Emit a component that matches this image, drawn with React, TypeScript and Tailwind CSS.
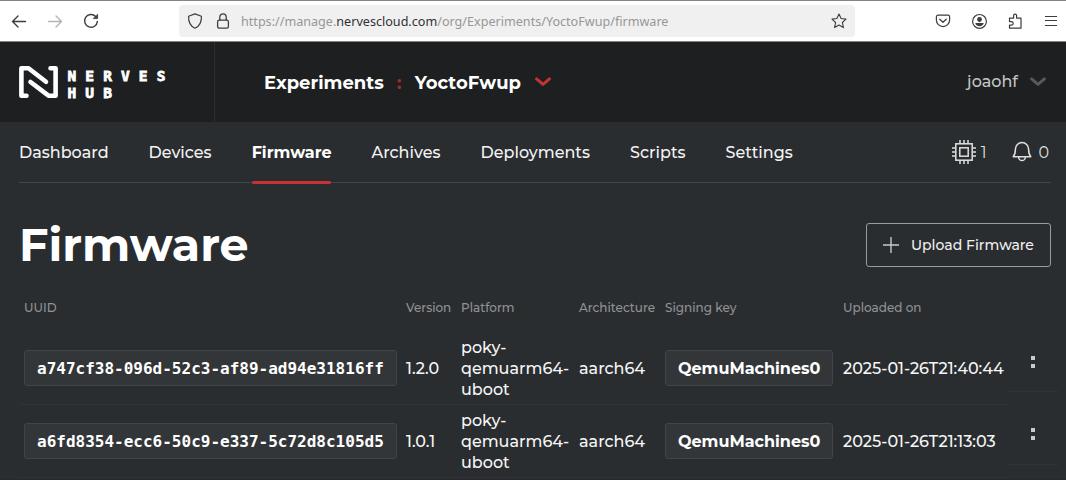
import type { ReactNode } from "react";

type IconProps = { className?: string; children: ReactNode; box: string; w: number; h: number };

function Icon({ className, children, box, w, h }: IconProps) {
  return (
    <svg
      className={className}
      width={w}
      height={h}
      viewBox={box}
      fill="none"
      stroke="currentColor"
      strokeLinecap="round"
      strokeLinejoin="round"
    >
      {children}
    </svg>
  );
}

function BrowserBar() {
  return (
    <div className="flex h-[42px] shrink-0 items-center border-y border-[#858585] bg-white pl-[11px] text-[#3d3d3d]">
      <Icon box="0 0 16 16" w={16} h={16}>
        <path d="M14.5 8.5H1.5M7 3L1.5 8.5L7 14" strokeWidth="1.4" />
      </Icon>
      <Icon box="0 0 16 16" w={16} h={16} className="ml-5 text-[#b4b4b4]">
        <path d="M1.5 8.5H14.5M9 3L14.5 8.5L9 14" strokeWidth="1.4" />
      </Icon>
      <Icon box="0 0 16 16" w={16} h={16} className="ml-5">
        <path d="M12.6 3.4A6.4 6.4 0 1 0 14.4 8.4" strokeWidth="1.4" />
        <path d="M14.6 1.6V5.6H10.6Z" fill="currentColor" strokeWidth="0.8" />
      </Icon>
      <div className="ml-[80px] flex h-8 w-[676px] items-center rounded bg-[#f0f0f0] pl-2 pr-2">
        <Icon box="0 0 16 16" w={16} h={16}>
          <path d="M8 .9L14.4 3.2C14.6 8.6 12.6 13.2 8 15.2C3.4 13.2 1.4 8.6 1.6 3.2Z" strokeWidth="1.2" />
        </Icon>
        <Icon box="0 0 14 16" w={14} h={16} className="ml-[13px]">
          <rect x="1.6" y="7.2" width="10.8" height="8" rx="1.6" strokeWidth="1.3" />
          <path d="M3.8 7V4A3.2 3.2 0 0 1 10.2 4V7" strokeWidth="1.3" />
        </Icon>
        <div className="ml-[11px] whitespace-nowrap pt-0.5 font-['Noto_Sans',sans-serif] text-[12.6px] font-normal leading-none text-[#979797]">
          https://manage.<span className="text-[#303030]">nervescloud.com</span>/org/Experiments/YoctoFwup/firmware
        </div>
        <Icon box="0 0 16 16" w={16} h={16} className="ml-auto">
          <path
            d="M8 1L10.1 5.5L15 6.1L11.4 9.5L12.4 14.6L8 12.1L3.6 14.6L4.6 9.5L1 6.1L5.9 5.5Z"
            strokeWidth="1.1"
          />
        </Icon>
      </div>
      <div className="ml-[80px] flex items-center gap-5">
        <Icon box="0 0 16 16" w={16} h={16}>
          <path d="M3 2.2H13A1.6 1.6 0 0 1 14.6 3.8V7A6.6 6.6 0 0 1 1.4 7V3.8A1.6 1.6 0 0 1 3 2.2Z" strokeWidth="1.2" />
          <path d="M4.8 6.3L8 9.3L11.2 6.3" strokeWidth="1.3" />
        </Icon>
        <Icon box="0 0 16 16" w={16} h={16}>
          <circle cx="8.5" cy="8.4" r="6.9" strokeWidth="1.2" />
          <circle cx="8.5" cy="6.5" r="2.4" fill="currentColor" stroke="none" />
          <path d="M4.3 10H12.7C12.6 12 10.6 13.2 8.5 13.2S4.4 12 4.3 10Z" fill="currentColor" stroke="none" />
        </Icon>
        <Icon box="0 0 16 16" w={16} h={16}>
          <path
            d="M2.5 5.1H6.6V2.6A1.5 1.5 0 0 1 9.6 2.6V5.1H14V15.2H2.5V12.2H4.4A1.6 1.6 0 0 0 4.4 8.6H2.5Z"
            strokeWidth="1.2"
          />
        </Icon>
        <Icon box="0 0 16 16" w={16} h={16}>
          <path d="M2.4 3.5H13.6M2.4 7.5H13.6M2.4 12.5H13.6" strokeWidth="1.2" />
        </Icon>
      </div>
    </div>
  );
}

function Logo() {
  return (
    <div className="flex w-[215px] items-center border-r border-[#2b2d30] pl-[19px]">
      <svg width="39" height="32" viewBox="0 0 39 32" fill="none" stroke="white">
        <path
          d="M7.5 29.7H2.4V2.3H9.5L27 15.8M31.5 2.3H36.6V29.7H29.5L11.5 16"
          strokeWidth="4.6"
          strokeLinejoin="round"
          strokeLinecap="round"
        />
      </svg>
      <div className="ml-[9.5px] flex flex-col whitespace-nowrap pt-[5px] font-['DejaVu_Sans_Mono',monospace] text-[14.5px] font-bold leading-[17px] tracking-[9.1px] text-white [-webkit-text-stroke:0.8px_white]">
        <span>NERVES</span>
        <span>HUB</span>
      </div>
    </div>
  );
}

function Chevron({ className }: { className: string }) {
  return (
    <Icon box="0 0 16 10" w={16} h={10} className={className}>
      <path d="M1.6 1.9L8 7.4L14.4 1.9" strokeWidth="3" />
    </Icon>
  );
}

function Header() {
  return (
    <header className="flex h-20 shrink-0 bg-[#1e1f21]">
      <Logo />
      <div className="flex flex-1 items-center pl-[49px] text-lg font-bold text-white">
        <span className="pt-0.5">Experiments</span>
        <span className="w-[31px] pt-0.5 text-center text-[#a02a2d]">:</span>
        <span className="pt-0.5">YoctoFwup</span>
        <Chevron className="ml-3.5 text-[#c73335]" />
      </div>
      <div className="flex items-center pr-5 text-base text-[#c3c4c5]">
        <span>joaohf</span>
        <Chevron className="ml-3 text-[#59595c]" />
      </div>
    </header>
  );
}

const tabs = ["Dashboard", "Devices", "Firmware", "Archives", "Deployments", "Scripts", "Settings"];

function Nav() {
  return (
    <nav className="ml-[19px] mr-[15px] flex h-[61px] shrink-0 border-b border-[#424548]">
      <div className="flex flex-1 gap-10">
        {tabs.map((tab) =>
          tab === "Firmware" ? (
            <div key={tab} className="relative flex items-center pt-0.5 font-bold text-white">
              {tab}
              <span className="absolute -bottom-0.5 left-0 right-px h-[3px] rounded-sm bg-[#c73335]" />
            </div>
          ) : (
            <div key={tab} className="flex items-center pt-0.5 text-[#f3f3f3]">
              {tab}
            </div>
          ),
        )}
      </div>
      <div className="flex items-center font-normal text-[#dedede]">
        <svg width="24" height="24" viewBox="0 0 24 24" fill="none" stroke="currentColor" strokeWidth="1.5">
          <rect x="3.8" y="3.8" width="16.4" height="16.4" />
          <rect x="7.8" y="7.8" width="8.4" height="8.4" />
          <path d="M8 0V4M12 0V4M16 0V4M8 20V24M12 20V24M16 20V24M0 8H4M0 12H4M0 16H4M20 8H24M20 12H24M20 16H24" />
        </svg>
        <span className="ml-[5px] pt-0.5">1</span>
        <svg
          className="ml-[26px]"
          width="20"
          height="22"
          viewBox="0 0 20 22"
          fill="none"
          stroke="currentColor"
          strokeWidth="1.5"
          strokeLinejoin="round"
        >
          <path d="M1.2 15.8C3 13.8 3.4 12 3.4 8.2A6.6 6.6 0 0 1 16.6 8.2C16.6 12 17 13.8 18.8 15.8Z" />
          <path d="M6.6 16A3.4 3.6 0 0 0 13.4 16" />
        </svg>
        <span className="ml-1.5 mr-0.5 pt-0.5">0</span>
      </div>
    </nav>
  );
}

function Chip({ children, mono }: { children: string; mono?: boolean }) {
  return (
    <span
      className={
        "flex h-9 w-fit items-center rounded-[3px] border border-[#424548] bg-[#333639] px-3 font-bold text-white " +
        (mono ? "font-['DejaVu_Sans_Mono',monospace]" : "")
      }
    >
      {children}
    </span>
  );
}

const rows = [
  { uuid: "a747cf38-096d-52c3-af89-ad94e31816ff", version: "1.2.0", uploaded: "2025-01-26T21:40:44" },
  { uuid: "a6fd8354-ecc6-50c9-e337-5c72d8c105d5", version: "1.0.1", uploaded: "2025-01-26T21:13:03" },
];

const columns = "grid grid-cols-[382px_55px_118px_86px_178px_165px]";

function FirmwareTable() {
  return (
    <div className="ml-[19px] flex flex-col text-[#f6f6f6]">
      <div className={columns + " h-[65px] pl-[5px] pt-[33px] text-xs leading-4 text-[#919395]"}>
        <span>UUID</span>
        <span>Version</span>
        <span>Platform</span>
        <span>Architecture</span>
        <span>Signing key</span>
        <span>Uploaded on</span>
      </div>
      {rows.map((row, index) => (
        <div key={row.uuid} className="flex h-[73px]">
          <div className={columns + " items-center border-b border-[#313437] pl-[5px] leading-[21px]"}>
            <Chip mono>{row.uuid}</Chip>
            <span>{row.version}</span>
            <span>
              poky-
              <br />
              qemuarm64-
              <br />
              uboot
            </span>
            <span>aarch64</span>
            <Chip>QemuMachines0</Chip>
            <span>{row.uploaded}</span>
          </div>
          <div
            className={
              "flex h-[60px] w-[50px] flex-col items-center gap-1 border-b border-[#313437] " +
              (index === 0 ? "pt-6" : "pt-[23px]")
            }
          >
            <span className="size-1 bg-[#c9c9c9]" />
            <span className="size-1 bg-[#c9c9c9]" />
          </div>
        </div>
      ))}
    </div>
  );
}

export default function App() {
  return (
    <div className="flex h-[480px] w-[1066px] flex-col overflow-hidden bg-[#2a2d30] font-['Montserrat',Inter,sans-serif] text-base font-medium">
      <BrowserBar />
      <Header />
      <Nav />
      <div className="ml-[19px] mr-[15px] mt-10 flex h-11 items-center justify-between">
        <h1 className="text-[46px] font-bold leading-none text-white">Firmware</h1>
        <button className="flex h-11 w-[185px] items-center rounded-[3px] border border-[#9a9b9d] pl-4 text-sm text-[#f0f0f0]">
          <svg width="16" height="16" viewBox="0 0 16 16" stroke="#c9c9c9" strokeWidth="1.4">
            <path d="M8 0V16M0 8H16" />
          </svg>
          <span className="ml-3">Upload Firmware</span>
        </button>
      </div>
      <FirmwareTable />
      <div className="mt-auto h-px bg-[#2b272e]" />
    </div>
  );
}
